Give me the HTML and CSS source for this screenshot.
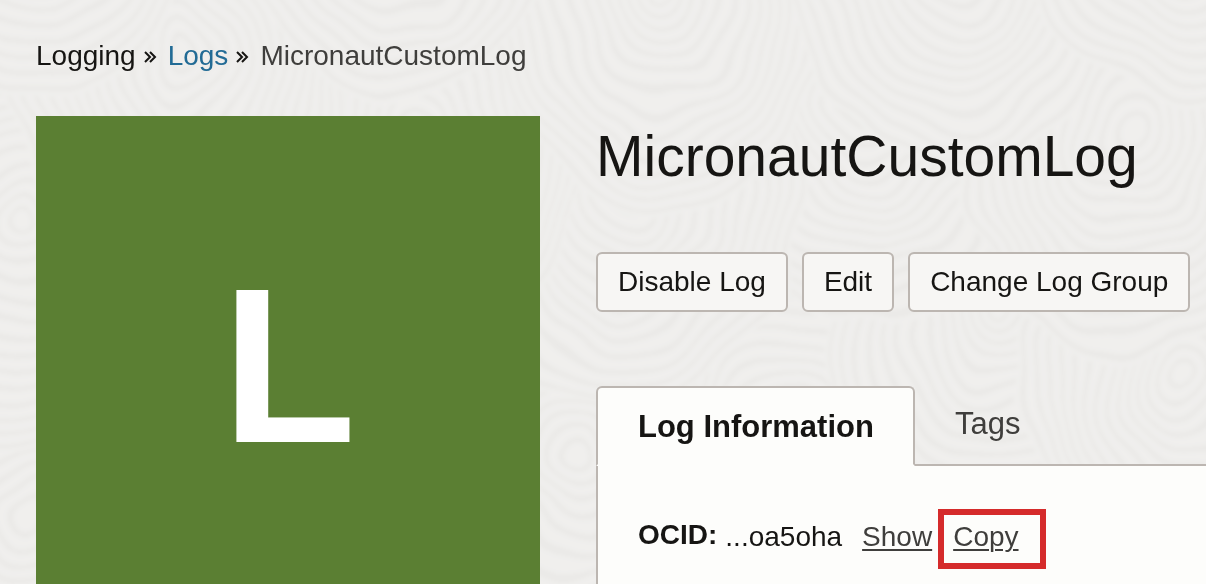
FILE: index.html
```
<!DOCTYPE html>
<html lang="en">
<head>
<meta charset="utf-8">
<title>MicronautCustomLog</title>
<link rel="stylesheet" href="styles.css">
</head>
<body>
<svg class="texture" aria-hidden="true" preserveAspectRatio="xMidYMid slice" viewBox="0 0 1206 584">
  <defs>
    <filter id="warp" x="-10%" y="-10%" width="120%" height="120%">
      <feTurbulence type="fractalNoise" baseFrequency="0.009" numOctaves="2" seed="4"/>
      <feDisplacementMap in="SourceGraphic" scale="50" xChannelSelector="R" yChannelSelector="G"/>
      <feGaussianBlur stdDeviation="2"/>
    </filter>
    <g id="rings" fill="none" stroke="#eae9e7" stroke-width="4">
      <circle r="12"/><circle r="24"/><circle r="36"/><circle r="48"/><circle r="60"/><circle r="72"/><circle r="84"/><circle r="96"/><circle r="108"/><circle r="120"/><circle r="132"/><circle r="144"/><circle r="156"/><circle r="168"/>
    </g>
    <g id="knot" transform="scale(1 1.3)"><circle r="174" fill="#f0efed"/><use href="#rings"/></g>
  </defs>
  <g filter="url(#warp)">
    <use href="#knot" x="20" y="520"/><use href="#knot" x="570" y="460"/>
    <use href="#knot" x="800" y="480"/><use href="#knot" x="1000" y="300"/>
    <use href="#knot" x="20" y="230"/><use href="#knot" x="1190" y="380"/>
    <use href="#knot" x="870" y="100"/><use href="#knot" x="630" y="180"/>
    <use href="#knot" x="1130" y="130"/><use href="#knot" x="420" y="120"/>
    <use href="#knot" x="660" y="-10"/><use href="#knot" x="960" y="-60"/>
    <use href="#knot" x="180" y="60"/><use href="#knot" x="400" y="-130"/>
    <use href="#knot" x="1190" y="-120"/><use href="#knot" x="40" y="-130"/>
  </g>
</svg>
<div class="page">
  <nav class="breadcrumb" aria-label="Breadcrumb">
    <span>Logging</span>
    <svg class="chevrons" viewBox="0 0 14 14" aria-hidden="true"><path d="M1 2l5 5-5 5M6 2l5 5-5 5"/></svg>
    <a class="crumb-link" href="#logs">Logs</a>
    <svg class="chevrons" viewBox="0 0 14 14" aria-hidden="true"><path d="M1 2l5 5-5 5M6 2l5 5-5 5"/></svg>
    <span class="current">MicronautCustomLog</span>
  </nav>
  <div class="resource">
    <div class="badge">L</div>
    <main class="details">
      <h1 class="title">MicronautCustomLog</h1>
      <div class="actions">
        <button class="action" type="button">Disable Log</button>
        <button class="action" type="button">Edit</button>
        <button class="action" type="button">Change Log Group</button>
      </div>
      <div class="tabs" role="tablist">
        <button class="tab selected" type="button" role="tab" aria-selected="true">Log Information</button>
        <button class="tab" type="button" role="tab" aria-selected="false">Tags</button>
      </div>
      <section class="panel">
        <div class="field">
          <strong class="label">OCID:</strong>
          <span class="value">...oa5oha</span>
          <a class="link" href="#show">Show</a>
          <span class="highlight"><a class="link" href="#copy">Copy</a></span>
        </div>
        <div class="next-field"><strong>C</strong></div>
      </section>
    </main>
  </div>
</div>
</body>
</html>
```
FILE: styles.css
```
* { box-sizing: border-box; }
body {
  margin: 0;
  height: 100vh;
  overflow: hidden;
  background: #f0efed;
  color: #161513;
  font-family: "Liberation Sans", Arial, sans-serif;
  font-size: 28px;
  line-height: 32px;
}
button { font: inherit; color: inherit; }
.texture {
  position: absolute;
  inset: 0;
  z-index: -1;
  width: 100%;
  height: 100%;
}
.page {
  display: flex;
  flex-direction: column;
  min-height: 100%;
  padding: 40px 0 0 36px;
}
.breadcrumb {
  display: flex;
  align-items: center;
  margin-bottom: 44px;
}
.chevrons {
  width: 14px;
  height: 14px;
  margin: 2px 10px 0 8px;
  fill: none;
  stroke: #161513;
  stroke-width: 2;
}
.crumb-link { color: #226b95; text-decoration: none; }
.current { color: #3f3e3c; }
.resource { display: flex; flex: 1; gap: 56px; }
.badge {
  display: flex;
  flex: 0 0 504px;
  align-items: center;
  justify-content: center;
  height: 504px;
  padding: 0 0 4px 2px;
  background: #5b7f33;
  color: #fff;
  font-size: 220px;
  font-weight: bold;
  line-height: 1;
}
.details {
  display: flex;
  flex: 1;
  flex-direction: column;
  min-width: 0;
}
.title {
  margin: 8px 0 64px;
  font-size: 57px;
  font-weight: normal;
  line-height: 64px;
}
.actions { display: flex; gap: 14px; }
.action {
  height: 60px;
  padding: 0 20px;
  border: 2px solid #bcb6b1;
  border-radius: 6px;
  background: #f7f6f4;
  white-space: nowrap;
}
.tabs {
  display: flex;
  margin-top: 74px;
}
.tab {
  height: 80px;
  padding: 0 40px 2px;
  border: 0;
  border-bottom: 2px solid #bcb6b1;
  background: none;
  color: #3f3e3c;
  font-size: 31px;
}
.tabs::after {
  content: "";
  flex: 1;
  border-bottom: 2px solid #bcb6b1;
}
.tab.selected {
  padding: 2px 39px 0 40px;
  border: 2px solid #bcb6b1;
  border-bottom-color: #fdfdfb;
  border-radius: 6px 6px 0 0;
  background: #fdfdfb;
  color: #161513;
  font-weight: bold;
}
.panel {
  flex: 1;
  padding: 43px 40px;
  border-left: 2px solid #bcb6b1;
  background: #fdfdfb;
}
.field {
  display: flex;
  align-items: flex-start;
  margin-bottom: 10px;
}
.label { margin: 10px 8px 0 0; }
.value { margin: 12px 20px 0 0; }
.field > .link { margin-top: 12px; }
.link {
  color: #3f3e3c;
  text-decoration-thickness: 2px;
  text-underline-offset: 3px;
}
.highlight {
  margin-left: 6px;
  padding: 6px 21px 10px 9px;
  border: 6px solid #d52b2b;
}
.next-field { color: #3f3e3c; }
```
